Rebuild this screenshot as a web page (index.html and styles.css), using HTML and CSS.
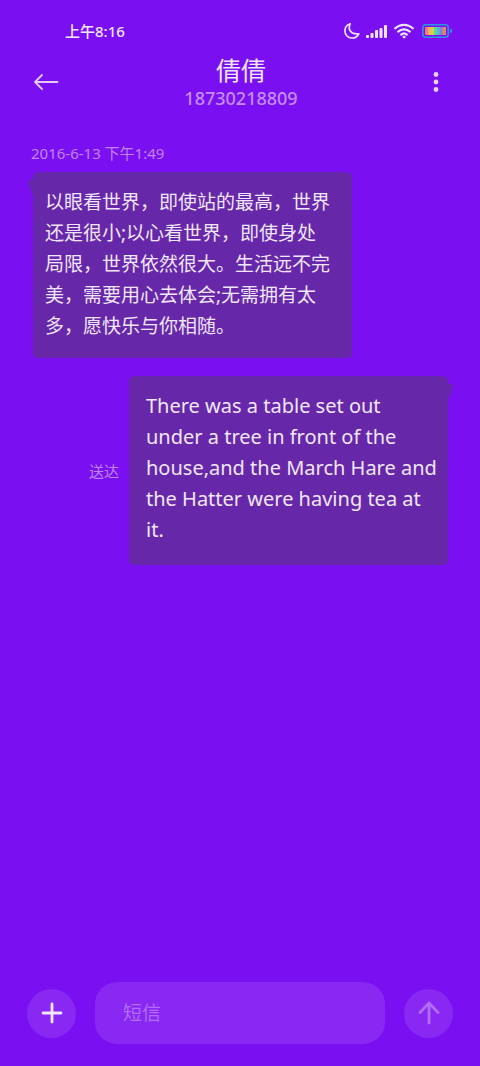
FILE: index.html
```html
<!DOCTYPE html>
<html lang="zh-CN">
<head>
<meta charset="utf-8">
<meta name="viewport" content="width=device-width, initial-scale=1">
<title>倩倩</title>
<link rel="stylesheet" href="styles.css">
</head>
<body>
<div class="status">
  <time class="clock">上午8:16</time>
  <div class="indicators">
    <svg width="16" height="18" viewBox="0 0 16 18" fill="none" stroke="#f0e4ff" stroke-width="1.7" stroke-linejoin="round"><path d="M6.200 1.800C2.900 2.800.9 5.800.9 9c0 4 3.100 7 7 7 3 0 5.700-1.600 6.900-4.200-5.200.8-9.400-1.700-9.600-5.800 0-1.500.3-3 1-4.200Z"/></svg>
    <svg width="22" height="16" viewBox="0 0 22 16" fill="#f0e4ff"><rect x="0" y="12" width="3" height="3" rx="1"/><rect x="4.500" y="10" width="3" height="5" rx="1"/><rect x="9" y="7" width="3" height="8" rx="1"/><rect x="13.500" y="5" width="3" height="10" rx="1"/><rect x="18" y="2" width="3" height="13" rx="1"/></svg>
    <svg class="wifi" width="20" height="16" viewBox="0 0 20 16" fill="none" stroke="#f0e4ff" stroke-width="2.200" stroke-linecap="round"><path d="M1.200 5.300c5-4.700 12.600-4.700 17.600 0M4.200 8.600c3.300-3.100 8.300-3.100 11.600 0M7.200 11.600c1.600-1.500 4-1.500 5.600 0"/><circle cx="10" cy="14" r="1" fill="#f0e4ff" stroke-width="1"/></svg>
    <svg class="battery" width="30" height="14" viewBox="0 0 30 14"><rect x=".8" y=".8" width="25.400" height="12.400" rx="3" fill="none" stroke="#2b96e8" stroke-width="1.600"/><rect x="28" y="5" width="2" height="4" rx="1" fill="#2b96e8"/><rect x="3" y="3" width="4" height="8" rx="1" fill="#f47a72"/><path fill="#f3b45c" d="M6 3h3v8H6z"/><path fill="#c9d65a" d="M9 3h3v8H9z"/><path fill="#62d68c" d="M12 3h3v8h-3z"/><path fill="#50b9d4" d="M15 3h3v8h-3z"/><path fill="#8b80e8" d="M18 3h3v8h-3z"/><path fill="#f08355" d="M21 3h3v8h-3z"/></svg>
  </div>
</div>
<header class="header">
  <button class="icon-button" type="button" aria-label="返回"><svg width="26" height="18" viewBox="0 0 26 18" fill="none" stroke="#e3c9fc" stroke-width="1.800" stroke-linecap="round" stroke-linejoin="round"><path d="M24.500 9H2M9 2 2 9l7 7"/></svg></button>
  <div class="contact">
    <h1 class="name">倩倩</h1>
    <p class="number">18730218809</p>
  </div>
  <button class="icon-button" type="button" aria-label="更多"><svg width="26" height="22" viewBox="0 0 26 22" fill="#e7d2fd"><circle cx="13" cy="3.500" r="2.400"/><circle cx="13" cy="11" r="2.400"/><circle cx="13" cy="18.500" r="2.400"/></svg></button>
</header>
<main class="thread">
  <time class="date">2016-6-13 下午1:49</time>
  <div class="row">
    <p class="bubble received">以眼看世界，即使站的最高，世界还是很小;以心看世界，即使身处局限，世界依然很大。生活远不完美，需要用心去体会;无需拥有太多，愿快乐与你相随。</p>
  </div>
  <div class="row row-sent">
    <span class="delivery">送达</span>
    <p class="bubble sent">There was a table set out under a tree in front of the house,and the March Hare and the Hatter were having tea at it.</p>
  </div>
</main>
<form class="composer">
  <button class="round-button" type="button" aria-label="添加"><svg width="22" height="22" viewBox="0 0 22 22" fill="none" stroke="#f3e6ff" stroke-width="2.800" stroke-linecap="round"><path d="M11 2v18M2 11h18"/></svg></button>
  <input class="field" type="text" placeholder="短信" aria-label="短信">
  <button class="round-button" type="submit" aria-label="发送"><svg width="22" height="24" viewBox="0 0 22 24" fill="none" stroke="#b26cf8" stroke-width="2.800" stroke-linecap="round" stroke-linejoin="round"><path d="M11 22V2M2 11.500 11 2l9 9.500"/></svg></button>
</form>
</body>
</html>
```
FILE: styles.css
```css
* {
  box-sizing: border-box;
}

body {
  display: flex;
  flex-direction: column;
  min-height: 100vh;
  margin: 0;
  background: #7a10f2;
  color: #f1e6fc;
  font-family: "Noto Sans", "Noto Sans CJK SC", sans-serif;
}

h1,
p {
  margin: 0;
}

svg {
  display: block;
}

button {
  display: grid;
  place-items: center;
  flex: none;
  padding: 0;
  border: 0;
  background: none;
}

.status {
  display: flex;
  align-items: center;
  justify-content: space-between;
  padding: 20px 28px 0 65px;
}

.clock {
  font-size: 15px;
  font-weight: 500;
  line-height: 22px;
}

.indicators {
  display: flex;
  align-items: center;
  gap: 6px;
}

.battery {
  margin-left: 2px;
}

.header {
  display: flex;
  align-items: center;
  justify-content: space-between;
  padding: 12px 31px 0 33px;
}

.icon-button {
  height: 56px;
}

.contact {
  text-align: center;
}

.name {
  font-size: 25px;
  font-weight: 400;
  line-height: 32px;
}

.number {
  color: #c48dfa;
  font-size: 18px;
  font-weight: 500;
  line-height: 24px;
}

.thread {
  display: flex;
  flex: 1;
  flex-direction: column;
  gap: 18px;
  padding: 32px 32px 18px 33px;
}

.date {
  margin: 0 0 -10px -2px;
  color: #c084f9;
  font-size: 15px;
  line-height: 22px;
}

.row {
  display: flex;
  align-items: center;
}

.row-sent {
  justify-content: flex-end;
  gap: 10px;
}

.delivery {
  color: #c084f9;
  font-size: 15px;
}

.bubble {
  position: relative;
  max-width: 319px;
  border-radius: 5px;
  background: #6628a8;
  line-height: 31px;
}

.bubble::before {
  position: absolute;
  top: 8px;
  width: 6px;
  height: 16px;
  background: #6628a8;
  content: "";
}

.received {
  padding: 15px 20px 16px 12px;
  font-size: 19px;
}

.received::before {
  left: -5px;
  clip-path: polygon(0 0, 100% 0, 100% 100%, 75% 90%, 30% 45%);
}

.sent {
  padding: 14px 8px 20px 17px;
  font-size: 20px;
}

.sent::before {
  right: -5px;
  clip-path: polygon(100% 0, 0 0, 0 100%, 25% 90%, 80% 45%);
}

.composer {
  display: flex;
  align-items: center;
  gap: 19px;
  padding: 0 27px 22px;
}

.round-button {
  width: 49px;
  height: 49px;
  border-radius: 50%;
  background: #8928f3;
}

.field {
  flex: 1;
  min-width: 0;
  height: 62px;
  padding: 0 28px;
  border: 0;
  border-radius: 22px;
  background: #8928f3;
  color: #f1e6fc;
  font: inherit;
  font-size: 19px;
}

.field::placeholder {
  color: #b26cf8;
  opacity: 1;
}
```
